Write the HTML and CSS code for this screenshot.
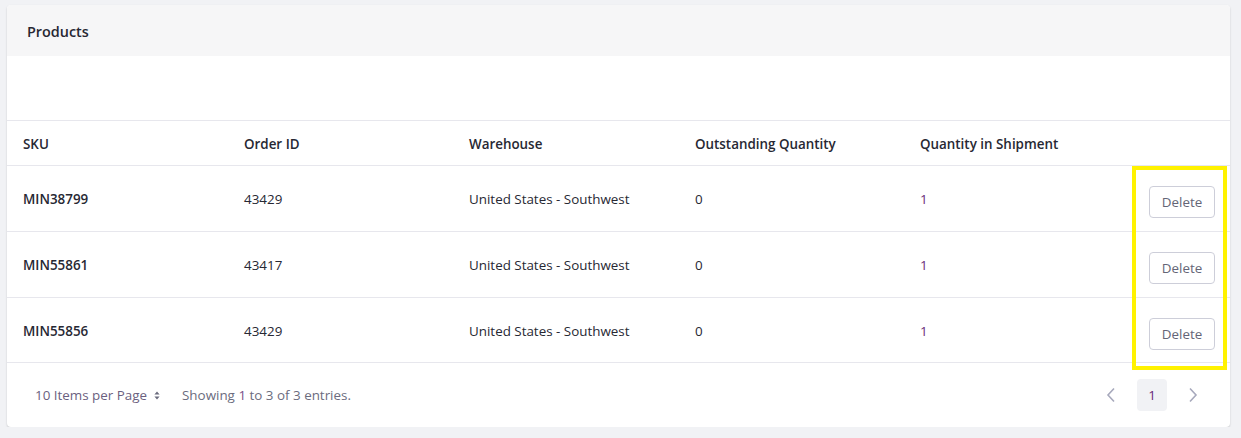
FILE: index.html
```html
<!DOCTYPE html>
<html>
<head>
<meta charset="utf-8">
<link rel="stylesheet" href="styles.css">
</head>
<body>
<div class="page">
  <div class="card">
    <div class="card-header">Products</div>
    <div class="toolbar"></div>
    <div class="table">
      <div class="row head">
        <div class="cell">SKU</div>
        <div class="cell">Order ID</div>
        <div class="cell">Warehouse</div>
        <div class="cell">Outstanding Quantity</div>
        <div class="cell">Quantity in Shipment</div>
        <div class="cell action"></div>
      </div>
      <div class="row">
        <div class="cell sku">MIN38799</div>
        <div class="cell">43429</div>
        <div class="cell">United States - Southwest</div>
        <div class="cell">0</div>
        <div class="cell qty">1</div>
        <div class="cell action"><button class="btn">Delete</button></div>
      </div>
      <div class="row">
        <div class="cell sku">MIN55861</div>
        <div class="cell">43417</div>
        <div class="cell">United States - Southwest</div>
        <div class="cell">0</div>
        <div class="cell qty">1</div>
        <div class="cell action"><button class="btn">Delete</button></div>
      </div>
      <div class="row last">
        <div class="cell sku">MIN55856</div>
        <div class="cell">43429</div>
        <div class="cell">United States - Southwest</div>
        <div class="cell">0</div>
        <div class="cell qty">1</div>
        <div class="cell action"><button class="btn">Delete</button></div>
      </div>
    </div>
    <div class="footer">
      <div class="per-page">10 Items per Page
        <svg class="sort" width="6" height="9" viewBox="0 0 6 9"><path d="M3 0.5L5.6 3.6H0.4Z M3 8.5L5.6 5.4H0.4Z" fill="#6b6c7e"/></svg>
      </div>
      <div class="showing">Showing <span class="hl">1</span> to 3 of 3 entries.</div>
      <div class="pager">
        <span class="chev"><svg width="10" height="16" viewBox="0 0 10 16"><path d="M8 1.5L2 8l6 6.5" fill="none" stroke="#a7a9bc" stroke-width="1.6"/></svg></span>
        <span class="page-num">1</span>
        <span class="chev"><svg width="10" height="16" viewBox="0 0 10 16"><path d="M2 1.5L8 8l-6 6.5" fill="none" stroke="#a7a9bc" stroke-width="1.6"/></svg></span>
      </div>
    </div>
    <div class="highlight"></div>
  </div>
</div>
</body>
</html>
```
FILE: styles.css
```css
* { box-sizing: border-box; }
html, body { margin: 0; padding: 0; }
body {
  background: #f1f2f5;
  font-family: "Open Sans", "Noto Sans", sans-serif;
  font-size: 13.4px;
  color: #272833;
}
.page { padding: 5px 11px 0 7px; }
.card {
  position: relative;
  background: #fff;
  border-radius: 4px;
  box-shadow: 0 1px 2px rgba(0,0,0,0.18);
  overflow: hidden;
}
.card-header {
  background: #f6f6f7;
  height: 51px;
  display: flex;
  align-items: center;
  padding: 1px 0 0 20px;
  font-weight: 600;
  font-size: 14.4px;
  color: #272833;
}
.toolbar { height: 65px; border-bottom: 1px solid #e7e7ed; }
.row {
  display: grid;
  grid-template-columns: 221px 225px 226px 225px 1fr auto;
  height: 66px;
  border-bottom: 1px solid #e7e7ed;
  align-items: center;
  padding-top: 1px;
}
.row.last { height: 65px; }
.row.head { height: 45px; font-weight: 600; padding-top: 2px; }
.cell { padding-left: 16px; white-space: nowrap; }
.sku { font-weight: 600; }
.qty { color: #6a2c78; }
.action { padding: 0 15px 0 0; width: 82px; display: flex; justify-content: flex-end; }
.btn {
  width: 66px;
  height: 32px;
  margin-top: 6px;
  border: 1px solid #cdced9;
  border-radius: 4px;
  background: #fff;
  color: #646576;
  font-family: inherit;
  font-size: 13.4px;
  font-weight: 500;
  padding: 0;
}
.footer {
  height: 64px;
  display: flex;
  align-items: center;
  padding: 0 27px 0 28px;
  color: #6b6c7e;
}
.per-page { color: #6b5f80; display: flex; align-items: center; gap: 5px; }
.sort { margin-left: 2px; }
.showing { margin-left: 22px; }
.hl { color: #7a4f8a; }
.pager { margin-left: auto; display: flex; align-items: center; }
.chev { width: 20px; display: flex; justify-content: center; }
.page-num {
  width: 30px; height: 32px;
  margin: 0 16px;
  background: #f1f2f5;
  border-radius: 4px;
  display: flex; align-items: center; justify-content: center;
  color: #6a2c78;
}
.highlight {
  position: absolute;
  left: 1125px;
  top: 161px;
  width: 95px;
  height: 204px;
  border: 4px solid #fff200;
}
```
